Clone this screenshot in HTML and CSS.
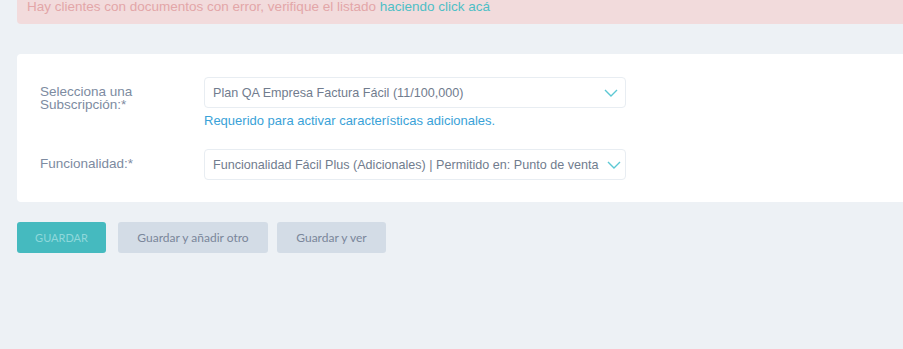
FILE: index.html
```html
<!DOCTYPE html>
<html lang="es">
<head>
  <meta charset="UTF-8" />
  <title>Agregar funcionalidad</title>
  <link rel="stylesheet" href="styles.css">
</head>
<body>

<div class="pagina">
  <!-- Aviso de documentos con error -->
  <div class="alerta">
    Hay clientes con documentos con error, verifique el listado <a href="#">haciendo click acá</a>
  </div>

  <!-- Formulario -->
  <div class="tarjeta">
    <div class="fila">
      <label class="etiqueta">Selecciona una Subscripción:*</label>
      <div class="campo">
        <div class="selector">
          <span>Plan QA Empresa Factura Fácil (11/100,000)</span>
          <svg class="flecha" width="14" height="8" viewBox="0 0 14 8"><path d="M1 1l6 6 6-6" fill="none" stroke="#5cc8d4" stroke-width="1.4"/></svg>
        </div>
        <div class="ayuda">Requerido para activar características adicionales.</div>
      </div>
    </div>

    <div class="fila">
      <label class="etiqueta">Funcionalidad:*</label>
      <div class="campo">
        <div class="selector">
          <span>Funcionalidad Fácil Plus (Adicionales) | Permitido en: Punto de venta</span>
          <svg class="flecha" width="14" height="8" viewBox="0 0 14 8"><path d="M1 1l6 6 6-6" fill="none" stroke="#5cc8d4" stroke-width="1.4"/></svg>
        </div>
      </div>
    </div>
  </div>

  <!-- Botones -->
  <div class="acciones">
    <button class="btn btn-guardar">GUARDAR</button>
    <button class="btn btn-gris">Guardar y añadir otro</button>
    <button class="btn btn-gris btn-ver">Guardar y ver</button>
  </div>
</div>

</body>
</html>
```

FILE: styles.css
```css
* {
  margin: 0;
  padding: 0;
  box-sizing: border-box;
}

body {
  background: #edf1f5;
  font-family: 'Liberation Sans', Arial, sans-serif;
  overflow: hidden;
}

.pagina {
  padding-left: 17px;
  margin-top: -16px;
}

.alerta {
  background: #f2dbdc;
  color: #e3a6a8;
  font-size: 13.5px;
  line-height: 20px;
  padding: 13px 10px 7px;
  border-radius: 4px 0 0 4px;
}

.alerta a {
  color: #4ebfc6;
  text-decoration: none;
}

.tarjeta {
  background: #fff;
  margin-top: 30px;
  border-radius: 4px 0 0 4px;
  padding: 23px 0 22px 23px;
}

.fila {
  display: flex;
}

.fila + .fila {
  margin-top: 20px;
}

.etiqueta {
  width: 164px;
  padding-right: 60px;
  padding-top: 8px;
  font-size: 13.5px;
  line-height: 13px;
  color: #7d8ba1;
}

.campo {
  width: 422px;
}

.selector {
  height: 31px;
  border: 1px solid #e8edf2;
  border-radius: 4px;
  display: flex;
  align-items: center;
  justify-content: space-between;
  padding: 0 7px 0 8px;
  font-size: 12.6px;
  color: #717c8e;
}

.selector span {
  white-space: nowrap;
}

.flecha {
  flex-shrink: 0;
  margin-left: 8px;
}

.ayuda {
  margin-top: 5px;
  font-size: 13px;
  line-height: 16px;
  color: #3aa2d8;
}

.acciones {
  display: flex;
  margin-top: 20px;
  gap: 12px;
}

.btn {
  height: 31px;
  border: none;
  border-radius: 3px;
  font-family: Lato, sans-serif;
  font-size: 12px;
  cursor: pointer;
}

.btn-guardar {
  width: 89px;
  background: #45babf;
  color: #8fd8db;
  font-size: 11px;
}

.btn-gris {
  width: 150px;
  background: #d3dce6;
  color: #7a869a;
}

.btn-ver {
  width: 109px;
  margin-left: -3px;
}
```
